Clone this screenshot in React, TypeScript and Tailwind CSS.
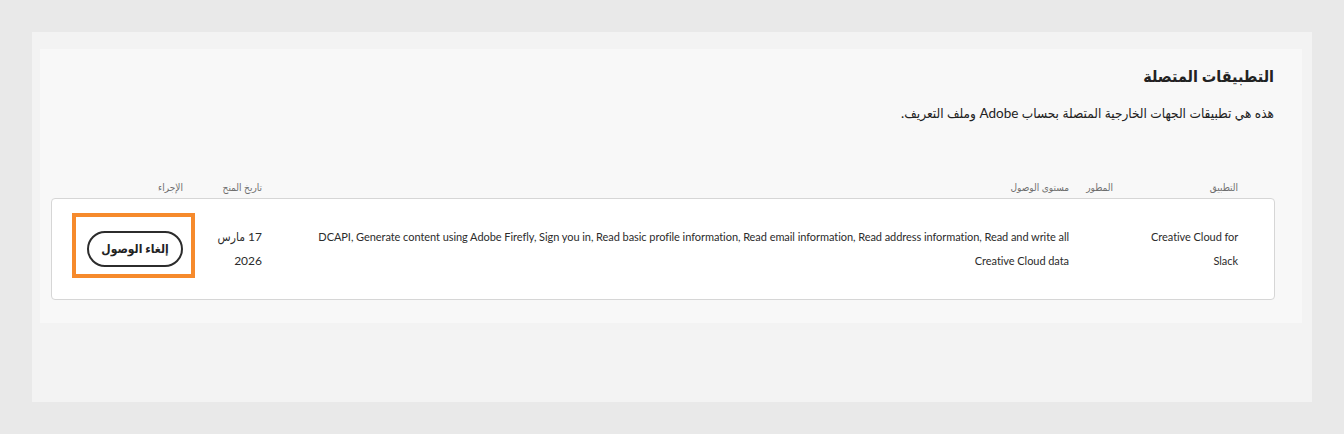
const headers = [
  { label: "التطبيق" },
  { label: "المطور" },
  { label: "مستوى الوصول" },
  { label: "تاريخ المنح" },
  { label: "الإجراء" },
];

const scopes =
  "DCAPI, Generate content using Adobe Firefly, Sign you in, Read basic profile information, Read email information, Read address information, Read and write all Creative Cloud data";

const gridCols = "grid grid-cols-[125px_44px_807px_79px_1fr]";

const App = () => {
  return (
    <div
      dir="rtl"
      className="h-[434px] bg-[#e9e9e9] px-8 pt-8 text-[#2c2c2c]"
      style={{ fontFamily: 'Lato, "DejaVu Sans Condensed", "DejaVu Sans", sans-serif' }}
    >
      <div className="h-[370px] bg-[#f3f3f3] pt-[17px] pr-[10px] pl-2">
        <div className="h-[274px] bg-[#f8f8f8] pr-[27px] pl-[11px] pt-[15px]">
          {/* Heading */}
          <div className="pr-px">
            <h1 className="text-[16px] font-bold leading-6 text-[#222]">التطبيقات المتصلة</h1>
            <p className="mt-[13px] text-[13.5px] leading-6 text-[#222]">
              هذه هي تطبيقات الجهات الخارجية المتصلة بحساب Adobe وملف التعريف.
            </p>
          </div>

          {/* Table header */}
          <div className={`${gridCols} mt-[52px] pr-[37px] text-[10px] leading-5 text-[#6e6e6e]`}>
            {headers.map((h) => (
              <div key={h.label}>{h.label}</div>
            ))}
          </div>

          {/* Row */}
          <div className="mt-[1px] rounded-[4px] border border-[#d6d6d6] bg-white pr-[36px] pt-[26px] pb-[26px]">
            <div className={`${gridCols} text-[11px] leading-6 text-[#2c2c2c] tracking-[-0.06px]`}>
              <div className="max-w-[90px]">Creative Cloud for Slack</div>
              <div></div>
              <div className="pl-[48px]">{scopes}</div>
              <div className="text-[12px] tracking-normal">
                <div>17 مارس</div>
                <div>2026</div>
              </div>
              <div className="flex items-center">
                <div className="relative">
                  <button className="h-9 w-24 rounded-full border-2 border-[#2c2c2c] text-[12px] font-bold tracking-normal text-[#222]">
                    إلغاء الوصول
                  </button>
                  <div className="pointer-events-none absolute -top-[18px] -bottom-[11px] -left-[15px] -right-[12px] border-4 border-[#f68a2c]"></div>
                </div>
              </div>
            </div>
          </div>
        </div>
      </div>
    </div>
  );
};

export default App;
